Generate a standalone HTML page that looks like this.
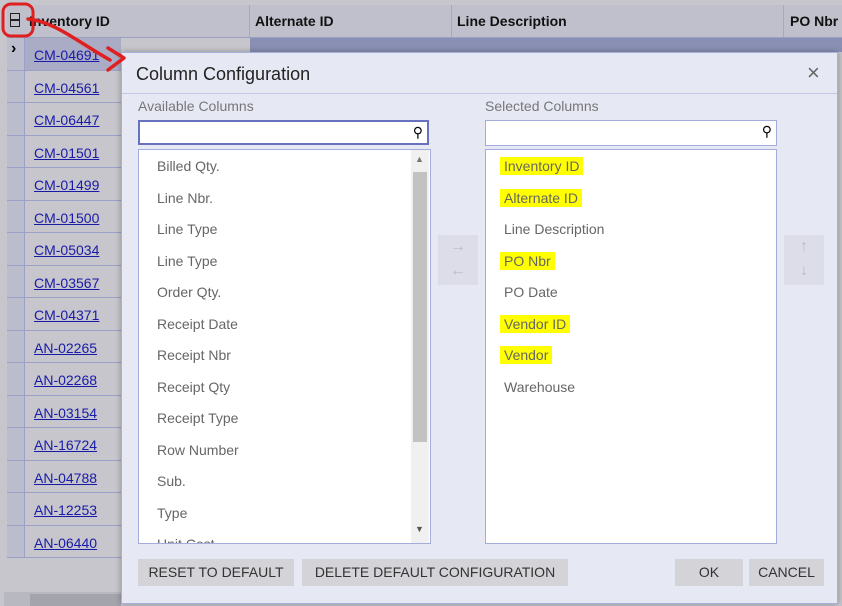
<!DOCTYPE html>
<html><head><style>
body{margin:0;width:842px;height:606px;overflow:hidden;background:#c6c6cc;font-family:"Liberation Sans",sans-serif;position:relative}
.a{position:absolute}
.hdr{top:5px;height:32px;background:#bfc0cc;border-bottom:1px solid #9aa0c0;font-weight:bold;font-size:14px;color:#111;line-height:32px}
.row{left:7px;width:114px;height:32.5px;box-sizing:border-box;border-bottom:1px solid #9aa0c8;background:#c6c6cc}
.row span{position:absolute;left:27px;top:9px;font-size:14px;color:#1a1aa8;text-decoration:underline}
.ind{position:absolute;left:0;top:0;width:17px;height:100%;border-right:1px solid #9aa0c8;background:#bcbdcc}
.dlg{left:121px;top:52px;width:715px;height:550px;background:#e6e8f4;border:1px solid #a9b0d8;box-shadow:0 0 6px rgba(0,0,0,.3)}
.lbl{font-size:14px;color:#777}
.box{background:#fff;border:1px solid #a4acdc}
.it{position:absolute;font-size:14px;color:#666}
.hl{background:#ffff00;padding:1px 4px;margin-left:-4px}
.btn{background:#d3d3d8;font-size:14px;color:#333;text-align:center;line-height:27px;height:27px}
</style></head><body>
<div class="a hdr" style="left:7px;width:242px;border-right:1px solid #aaa"><span style="padding-left:22px">Inventory ID</span></div>
<div class="a hdr" style="left:250px;width:201px;border-right:1px solid #aaa"><span style="padding-left:5px">Alternate ID</span></div>
<div class="a hdr" style="left:452px;width:331px;border-right:1px solid #aaa"><span style="padding-left:5px">Line Description</span></div>
<div class="a hdr" style="left:784px;width:58px"><span style="padding-left:6px">PO Nbr</span></div>
<div class="a" style="left:10px;top:13px;width:10px;height:14px;border:1px solid #222;box-sizing:border-box;background:linear-gradient(#222,#222) 0 5px/100% 2px no-repeat"></div>
<div class="a" style="left:250px;top:38px;width:592px;height:14px;background:#8a90b4"></div>
<div class="a row" style="top:38px;background:#a9acc4"><div class="ind"><span style="left:4px;top:2px;text-decoration:none;color:#000;font-weight:bold;font-size:16px">›</span></div><span>CM-04691</span></div>
<div class="a row" style="top:70.5px"><div class="ind"></div><span>CM-04561</span></div>
<div class="a row" style="top:103px"><div class="ind"></div><span>CM-06447</span></div>
<div class="a row" style="top:135.5px"><div class="ind"></div><span>CM-01501</span></div>
<div class="a row" style="top:168px"><div class="ind"></div><span>CM-01499</span></div>
<div class="a row" style="top:200.5px"><div class="ind"></div><span>CM-01500</span></div>
<div class="a row" style="top:233px"><div class="ind"></div><span>CM-05034</span></div>
<div class="a row" style="top:265.5px"><div class="ind"></div><span>CM-03567</span></div>
<div class="a row" style="top:298px"><div class="ind"></div><span>CM-04371</span></div>
<div class="a row" style="top:330.5px"><div class="ind"></div><span>AN-02265</span></div>
<div class="a row" style="top:363px"><div class="ind"></div><span>AN-02268</span></div>
<div class="a row" style="top:395.5px"><div class="ind"></div><span>AN-03154</span></div>
<div class="a row" style="top:428px"><div class="ind"></div><span>AN-16724</span></div>
<div class="a row" style="top:460.5px"><div class="ind"></div><span>AN-04788</span></div>
<div class="a row" style="top:493px"><div class="ind"></div><span>AN-12253</span></div>
<div class="a row" style="top:525.5px"><div class="ind"></div><span>AN-06440</span></div>
<div class="a" style="left:4px;top:592px;width:117px;height:14px;background:#b8b8c0"></div>
<div class="a" style="left:30px;top:594px;width:91px;height:12px;background:#a4a4ac"></div>

<div class="a dlg">
 <div class="a" style="left:14px;top:11px;font-size:18px;color:#222">Column Configuration</div>
 <div class="a" style="left:685px;top:7px;font-size:22px;color:#666">×</div>
 <div class="a" style="left:0;top:40px;width:715px;height:1px;background:#c4c8e4"></div>
 <div class="a lbl" style="left:16px;top:45px">Available Columns</div>
 <div class="a box" style="left:16px;top:67px;width:291px;height:25px;border:2px solid #6870c0;box-sizing:border-box"><span class="a" style="right:4px;top:2px;font-size:14px;color:#000">⚲</span></div>
 <div class="a box" style="left:16px;top:96px;width:291px;height:393px;overflow:hidden">
  <div class="a" style="left:272px;top:0;width:18px;height:393px;background:#f0f0f0"></div>
  <div class="a" style="left:274px;top:22px;width:14px;height:270px;background:#c2c2c2"></div>
  <div class="a" style="left:276px;top:4px;font-size:9px;color:#777">▲</div>
  <div class="a" style="left:276px;top:374px;font-size:9px;color:#555">▼</div>
  <div class="it" style="left:18px;top:8px">Billed Qty.</div>
  <div class="it" style="left:18px;top:40px">Line Nbr.</div>
  <div class="it" style="left:18px;top:71px">Line Type</div>
  <div class="it" style="left:18px;top:103px">Line Type</div>
  <div class="it" style="left:18px;top:134px">Order Qty.</div>
  <div class="it" style="left:18px;top:166px">Receipt Date</div>
  <div class="it" style="left:18px;top:197px">Receipt Nbr</div>
  <div class="it" style="left:18px;top:229px">Receipt Qty</div>
  <div class="it" style="left:18px;top:260px">Receipt Type</div>
  <div class="it" style="left:18px;top:292px">Row Number</div>
  <div class="it" style="left:18px;top:323px">Sub.</div>
  <div class="it" style="left:18px;top:355px">Type</div>
  <div class="it" style="left:18px;top:386px">Unit Cost</div>
 </div>
 <div class="a" style="left:316px;top:182px;width:40px;height:50px;background:#dcdde8;color:#bbb;font-size:16px;text-align:center;line-height:24px">→<br>←</div>
 <div class="a lbl" style="left:363px;top:45px">Selected Columns</div>
 <div class="a box" style="left:363px;top:67px;width:290px;height:24px"><span class="a" style="right:4px;top:2px;font-size:14px;color:#000">⚲</span></div>
 <div class="a box" style="left:363px;top:96px;width:290px;height:393px">
  <div class="it" style="left:18px;top:8px"><span class="hl">Inventory ID</span></div>
  <div class="it" style="left:18px;top:40px"><span class="hl">Alternate ID</span></div>
  <div class="it" style="left:18px;top:71px">Line Description</div>
  <div class="it" style="left:18px;top:103px"><span class="hl">PO Nbr</span></div>
  <div class="it" style="left:18px;top:134px">PO Date</div>
  <div class="it" style="left:18px;top:166px"><span class="hl">Vendor ID</span></div>
  <div class="it" style="left:18px;top:197px"><span class="hl">Vendor</span></div>
  <div class="it" style="left:18px;top:229px">Warehouse</div>
 </div>
 <div class="a" style="left:662px;top:182px;width:40px;height:50px;background:#dcdde8;color:#bbb;font-size:16px;text-align:center;line-height:24px">↑<br>↓</div>
 <div class="a btn" style="left:16px;top:506px;width:156px">RESET TO DEFAULT</div>
 <div class="a btn" style="left:180px;top:506px;width:266px">DELETE DEFAULT CONFIGURATION</div>
 <div class="a btn" style="left:553px;top:506px;width:68px">OK</div>
 <div class="a btn" style="left:627px;top:506px;width:75px">CANCEL</div>
</div>
<svg class="a" style="left:0;top:0" width="842" height="606">
 <rect x="3" y="4" width="30" height="32" rx="8" fill="none" stroke="#e02020" stroke-width="3"/>
 <path d="M28 19 C55 22 75 40 110 60" fill="none" stroke="#e02020" stroke-width="3.5" stroke-linecap="round"/>
 <path d="M108 48 L124 58 L108 70" fill="none" stroke="#e02020" stroke-width="3.5" stroke-linecap="round" stroke-linejoin="round"/>
</svg>
</body></html>
